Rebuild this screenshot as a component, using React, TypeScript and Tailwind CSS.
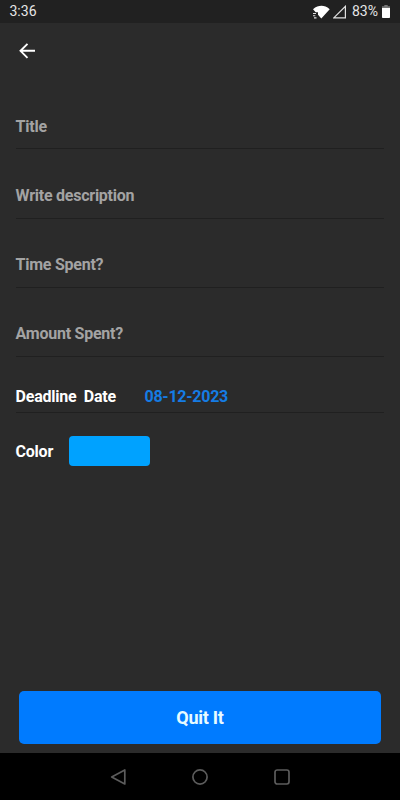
import React from "react";

const fields = ["Title", "Write description", "Time Spent?", "Amount Spent?"];

function StatusBar() {
  return (
    <div className="flex h-[23px] items-center justify-between bg-[#212121] pr-[10px] pl-[9.500px] text-[14px] text-[#e6e6e6]">
      <span className="leading-[23px]">3:36</span>
      <div className="flex h-full items-center">
        <svg width="19" height="14" viewBox="0 0 19 14">
          <path d="M1 4.200C3.900 1.700 6.700.8 9.500.8s5.300.9 8.200 3.400L9.300 13.500 6 9.700V7.300H3.700z" fill="#fff" />
          <path d="M1 8.500h3M1 10.700h2.300M2 12.900h2.500" stroke="#ddd" strokeWidth="1.100" />
        </svg>
        <svg className="ml-[2px]" width="14" height="14" viewBox="0 0 14 14">
          <path d="M.8 12.900 12.400 1.300v11.600z" fill="none" stroke="#e0e0e0" strokeWidth="1.200" />
        </svg>
        <span className="ml-[5px] leading-[23px]">83%</span>
        <svg className="ml-[4px]" width="8" height="13" viewBox="0 0 8 13">
          <path d="M2.300 0h3.400v1.200H8V4H0V1.200h2.300z" fill="#777" />
          <path d="M0 3h8v9.200a.8.8 0 0 1-.8.800H.8a.8.8 0 0 1-.8-.800z" fill="#fff" />
        </svg>
      </div>
    </div>
  );
}

function NavBar() {
  return (
    <div className="flex h-[47px] items-center justify-center gap-[64px] bg-black">
      <svg width="18" height="18" viewBox="0 0 18 18" fill="none" stroke="#5c5c5c" strokeWidth="1.700">
        <path d="M2.700 9 15.800 2v14z" strokeLinejoin="round" />
      </svg>
      <svg width="18" height="18" viewBox="0 0 18 18" fill="none" stroke="#5c5c5c" strokeWidth="1.700">
        <circle cx="9" cy="9" r="7.100" />
      </svg>
      <svg width="18" height="18" viewBox="0 0 18 18" fill="none" stroke="#5c5c5c" strokeWidth="1.700">
        <rect x="2" y="2" width="14" height="14" rx="2.200" />
      </svg>
    </div>
  );
}

export default function App() {
  return (
    <div className="flex h-[800px] w-[400px] flex-col bg-[#2b2b2b] font-['Roboto',sans-serif]">
      <StatusBar />
      <header className="flex h-[57px] pt-[18px] pl-[17px]">
        <svg width="20" height="20" viewBox="0 0 20 20" fill="none" stroke="#fff" strokeWidth="1.900">
          <path d="M18 9.800H4M10.500 2.800l-7 7 7 7" />
        </svg>
      </header>
      <main className="flex flex-1 flex-col px-[16px] text-[16px] font-bold tracking-[-0.250px]">
        {fields.map((label) => (
          <div key={label} className="flex h-[69.25px] flex-col justify-end border-b border-[#202020] pb-[11.700px] text-[#a3a3a3]">
            <span className="-ml-[0.400px] leading-[20px]">{label}</span>
          </div>
        ))}
        <div className="flex h-[56px] items-end border-b border-[#202020] pb-[5px] leading-[20px]">
          <span className="-ml-[0.400px] w-[128.900px] whitespace-pre text-white">Deadline  Date</span>
          <span className="text-[#157ce4]">08-12-2023</span>
        </div>
        <div className="mt-[23px] flex h-[30px] items-center text-white">
          <span className="-ml-[0.400px] w-[53.400px] pt-[2px]">Color</span>
          <div className="h-[30px] w-[80.500px] rounded-[4px] bg-[#00a2ff]" />
        </div>
        <button className="mx-[3px] mt-auto mb-[9px] h-[53px] rounded-[5px] bg-[#007bff] text-[18px] text-[#e8fbff]">
          Quit It
        </button>
      </main>
      <NavBar />
    </div>
  );
}
